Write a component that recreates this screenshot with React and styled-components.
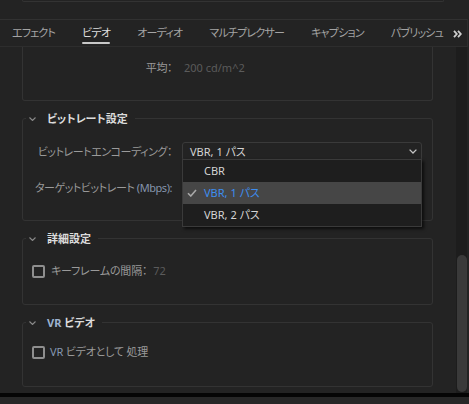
import React from "react";
import styled, { createGlobalStyle } from "styled-components";

const Global = createGlobalStyle`
  html, body { margin: 0; padding: 0; background: #232323; }
  body { font-family: "Noto Sans", "Noto Sans CJK JP", sans-serif; font-size: 11px; }
  * { box-sizing: border-box; }
`;

const Frame = styled.div`
  width: 469px;
  height: 404px;
  display: flex;
  flex-direction: column;
  background: #232323;
  overflow: hidden;
  font-feature-settings: "palt";
`;

const TopArea = styled.div`
  height: 19px;
  padding-left: 22px;
  flex-shrink: 0;
`;

const TopStub = styled.div`
  width: 422px;
  height: 2px;
  border: 1px solid #333333;
  border-top: none;
  border-radius: 0 0 3px 3px;
`;

const TabBar = styled.div`
  width: 468px;
  height: 28px;
  flex-shrink: 0;
  display: flex;
  border-top: 1px solid #313131;
  border-bottom: 1px solid #2d2d2d;
  border-right: 1px solid #2d2d2d;
`;

const TabList = styled.div`
  flex: 1;
  display: flex;
  gap: 27px;
  padding-left: 12px;
  overflow: hidden;
  white-space: nowrap;
`;

const Tab = styled.div`
  flex-shrink: 0;
  display: flex;
  flex-direction: column;
  padding-top: 6px;
  line-height: 14px;
  letter-spacing: -0.8px;
  color: ${(p) => (p.$active ? "#dedede" : "#a4a4a4")};
  &::after {
    content: "";
    height: 2px;
    margin-top: 2px;
    border-radius: 1px;
    background: ${(p) => (p.$active ? "#c8c8c8" : "transparent")};
  }
`;

const MoreButton = styled.div`
  width: 19px;
  display: flex;
  align-items: center;
  justify-content: center;
  padding-top: 1px;
`;

const Body = styled.div`
  flex: 1;
  display: flex;
  min-height: 0;
`;

const ScrollArea = styled.div`
  flex: 1;
  padding: 0 23px 0 22px;
  overflow: hidden;
`;

const Track = styled.div`
  width: 11px;
  background: #1d1d1d;
  display: flex;
  flex-direction: column;
  justify-content: flex-end;
`;

const Thumb = styled.div`
  width: 10px;
  height: 137px;
  margin: 0 0 1px 1px;
  border-radius: 5px;
  background: #3a3a3a;
`;

const RightStrip = styled.div`
  width: 2px;
  background: #232323;
`;

const BlackBar = styled.div`
  height: 4px;
  flex-shrink: 0;
  background: #050505;
`;

const BottomBar = styled.div`
  height: 7px;
  flex-shrink: 0;
  background: #272727;
`;

const CutBox = styled.div`
  height: 54px;
  border: 1px solid #333333;
  border-top: none;
  border-radius: 0 0 3px 3px;
  padding-top: 13px;
`;

const Section = styled.div`
  margin-top: 10px;
`;

const Header = styled.div`
  position: relative;
  z-index: 1;
  height: 15px;
  margin-bottom: -8px;
  padding-left: 4px;
  display: flex;
`;

const Legend = styled.div`
  display: flex;
  align-items: center;
  gap: 11px;
  height: 15px;
  padding: 0 7px 0 3px;
  background: #232323;
  color: #dcdcdc;
  font-weight: 700;
  line-height: 15px;
`;

const Box = styled.div`
  border: 1px solid #333333;
  border-radius: 3px;
  padding: ${(p) => p.$pad};
`;

const Grid = styled.div`
  display: grid;
  grid-template-columns: 149px 1fr;
  column-gap: ${(p) => p.$gap || "10px"};
  row-gap: 17px;
  padding-right: 10px;
  align-items: center;
`;

const Label = styled.div`
  text-align: right;
  color: #9a9a9a;
  line-height: 16px;
  letter-spacing: -0.45px;
  white-space: nowrap;
`;

const Value = styled.div`
  color: #5b5b5b;
  line-height: 16px;
  letter-spacing: 0;
`;

const Tint = styled.span`
  color: ${(p) => p.$c};
`;

const SelectBox = styled.div`
  position: relative;
  height: 19px;
  border: 1px solid #3a3a3a;
  border-radius: 3px;
  display: flex;
  align-items: center;
  justify-content: space-between;
  padding: 0 4px 0 7px;
  color: #d4d4d4;
  line-height: 16px;
`;

const Menu = styled.div`
  position: absolute;
  z-index: 10;
  top: calc(100% - 1px);
  left: -1px;
  right: -1px;
  background: #1e1e1e;
  border: 1px solid #3a3a3a;
  box-shadow: 2px 2px 3px rgba(0, 0, 0, 0.65);
`;

const MenuItem = styled.div`
  height: 22px;
  display: flex;
  align-items: center;
  gap: 7px;
  padding-left: 4px;
  background: ${(p) => (p.$selected ? "#464646" : "transparent")};
  color: ${(p) => (p.$selected ? "#3d8ef0" : "#d4d4d4")};
`;

const CheckSlot = styled.div`
  width: 10px;
  height: 8px;
  display: flex;
`;

const CheckRow = styled.div`
  display: flex;
  align-items: center;
  gap: ${(p) => p.$gap || "6px"};
  height: 16px;
  padding-left: 9px;
  color: #9a9a9a;
  line-height: 16px;
  letter-spacing: -0.2px;
  white-space: nowrap;
`;

const CheckBox = styled.div`
  width: 13px;
  height: 13px;
  flex-shrink: 0;
  border: 2px solid #8e8e8e;
  border-radius: 2px;
`;

const Chevron = () => (
  <svg width="7" height="4" viewBox="0 0 7 4">
    <polyline points="0.5,0.5 3.5,3.5 6.5,0.5" fill="none" stroke="#8a8a8a" strokeWidth="1.1" />
  </svg>
);

const SectionHead = ({ children }) => (
  <Header>
    <Legend>
      <Chevron />
      <span>{children}</span>
    </Legend>
  </Header>
);

export default function App() {
  return (
    <>
      <Global />
      <Frame>
        <TopArea>
          <TopStub />
        </TopArea>
        <TabBar>
          <TabList>
            <Tab>エフェクト</Tab>
            <Tab $active>ビデオ</Tab>
            <Tab>オーディオ</Tab>
            <Tab>マルチプレクサー</Tab>
            <Tab>キャプション</Tab>
            <Tab>パブリッシュ</Tab>
          </TabList>
          <MoreButton>
            <svg width="9" height="8" viewBox="0 0 9 8">
              <polyline points="1,0.8 3.8,4 1,7.2" fill="none" stroke="#cfcfcf" strokeWidth="1.8" />
              <polyline points="5,0.8 7.8,4 5,7.2" fill="none" stroke="#cfcfcf" strokeWidth="1.8" />
            </svg>
          </MoreButton>
        </TabBar>
        <Body>
          <ScrollArea>
            <CutBox>
              <Grid $gap="12px">
                <Label>平均：</Label>
                <Value>200 cd/m^2</Value>
              </Grid>
            </CutBox>

            <Section>
              <SectionHead>ビットレート設定</SectionHead>
              <Box $pad="23px 0 23px 0">
                <Grid>
                  <Label>ビットレートエンコーディング：</Label>
                  <SelectBox>
                    <span>VBR, 1 パス</span>
                    <svg width="8" height="5" viewBox="0 0 8 5">
                      <polyline points="0.6,0.6 4,4 7.4,0.6" fill="none" stroke="#c4c4c4" strokeWidth="1.3" />
                    </svg>
                    <Menu>
                      <MenuItem>
                        <CheckSlot />
                        <span>CBR</span>
                      </MenuItem>
                      <MenuItem $selected>
                        <CheckSlot>
                          <svg width="10" height="8" viewBox="0 0 10 8">
                            <polyline points="1,4.2 3.8,7 9,1" fill="none" stroke="#a9a9a9" strokeWidth="1.6" />
                          </svg>
                        </CheckSlot>
                        <span>VBR, 1 パス</span>
                      </MenuItem>
                      <MenuItem>
                        <CheckSlot />
                        <span>VBR, 2 パス</span>
                      </MenuItem>
                    </Menu>
                  </SelectBox>
                  <Label>
                    ターゲットビットレート <Tint $c="#8595ad">(Mbps):</Tint>
                  </Label>
                  <div style={{ height: 19 }} />
                </Grid>
              </Box>
            </Section>

            <Section>
              <SectionHead>詳細設定</SectionHead>
              <Box $pad="24px 0 25px 0">
                <CheckRow>
                  <CheckBox />
                  <span>キーフレームの間隔：</span>
                  <Value>72</Value>
                </CheckRow>
              </Box>
            </Section>

            <Section>
              <SectionHead>
                <Tint $c="#9db3cf">VR</Tint> ビデオ
              </SectionHead>
              <Box $pad="21px 0 26px 0">
                <CheckRow $gap="5px">
                  <CheckBox />
                  <span>
                    <Tint $c="#8698b2">VR</Tint> ビデオとして 処理
                  </span>
                </CheckRow>
              </Box>
            </Section>
          </ScrollArea>
          <Track>
            <Thumb />
          </Track>
          <RightStrip />
        </Body>
        <BlackBar />
        <BottomBar />
      </Frame>
    </>
  );
}
